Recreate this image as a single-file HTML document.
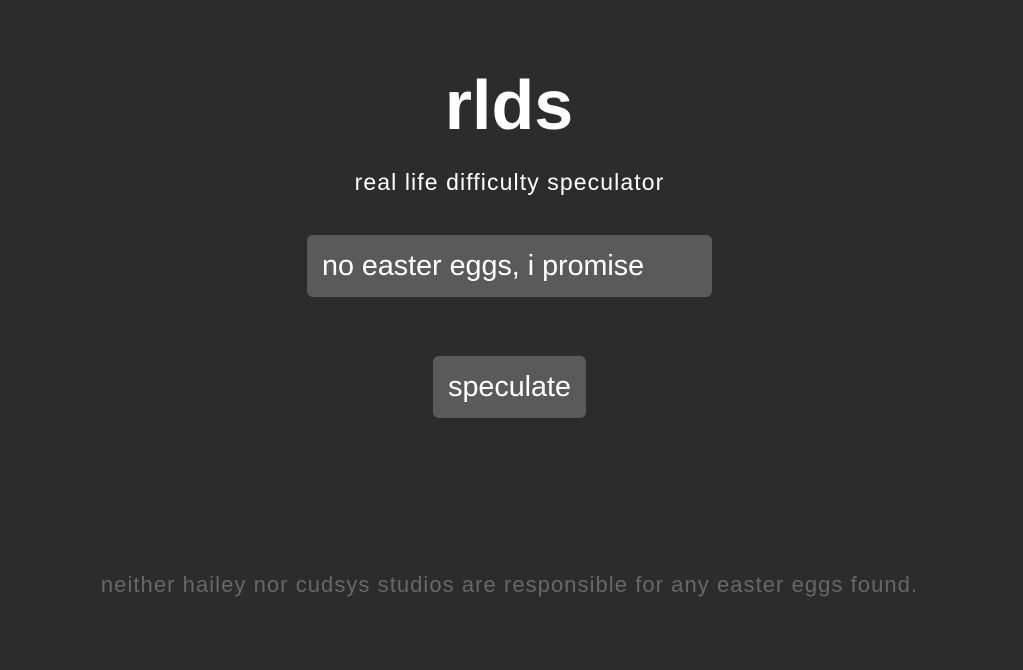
<!DOCTYPE html>
<html><head><meta charset="utf-8"><style>
html,body{margin:0;padding:0;background:#2c2c2c;width:1023px;height:670px;overflow:hidden;font-family:"Liberation Sans",sans-serif;color:#fff}
.t{position:absolute;left:0;width:1023px;text-align:center;white-space:nowrap}
h1{position:absolute;left:0;width:1018px;text-align:center;margin:0;top:60px;font-size:70px;font-weight:bold;line-height:90px}
.sub{top:168px;font-size:23px;line-height:28px;letter-spacing:1.1px;width:1019px}
.inp{position:absolute;left:307px;top:235px;width:405px;height:62px;background:#5a5a5a;border-radius:6px;box-sizing:border-box;padding-left:15px;font-size:28.7px;line-height:62px}
.btn{position:absolute;left:433px;top:356px;width:153px;height:62px;background:#5a5a5a;border-radius:6px;text-align:center;font-size:28.7px;line-height:62px}
.foot{top:571px;font-size:22px;line-height:28px;color:#676767;letter-spacing:1.05px;width:1019px}
</style></head><body>
<h1>rlds</h1>
<div class="t sub">real life difficulty speculator</div>
<div class="inp">no easter eggs, i promise</div>
<div class="btn">speculate</div>
<div class="t foot">neither hailey nor cudsys studios are responsible for any easter eggs found.</div>
</body></html>
